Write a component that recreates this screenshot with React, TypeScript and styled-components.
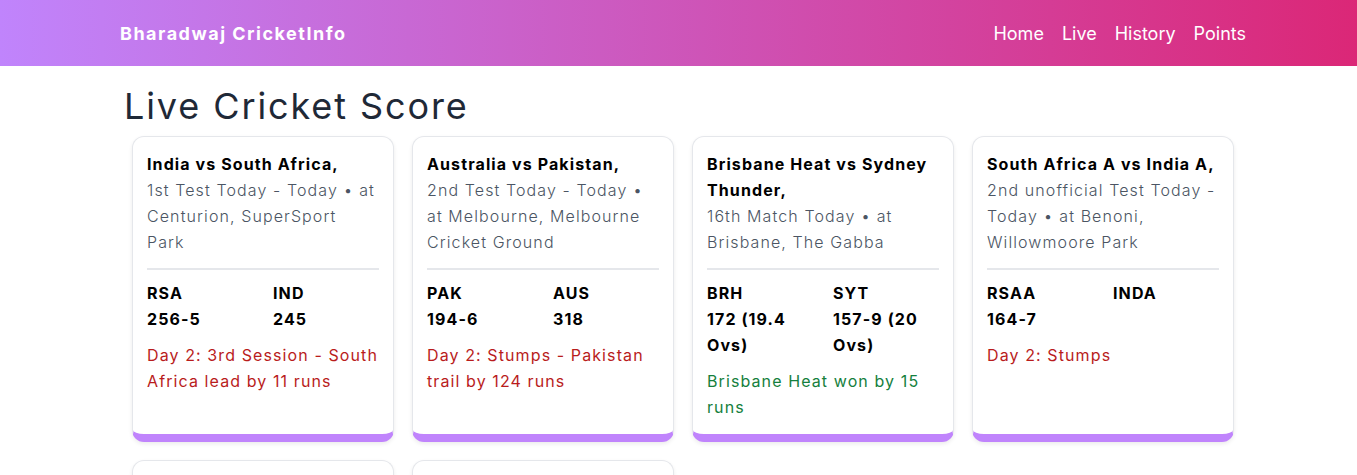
import styled, { createGlobalStyle } from 'styled-components'

const GlobalStyle = createGlobalStyle`
  * {
    box-sizing: border-box;
  }

  body {
    margin: 0;
    font-family: Inter, 'Noto Sans', sans-serif;
    background: #ffffff;
    color: #111827;
  }
`

interface Match {
  title: string
  info: string
  teams: { name: string; score: string }[]
  status: string
  result: 'live' | 'done'
}

const matches: Match[] = [
  {
    title: 'India vs South Africa,',
    info: '1st Test Today - Today • at Centurion, SuperSport Park',
    teams: [
      { name: 'RSA', score: '256-5' },
      { name: 'IND', score: '245' },
    ],
    status: 'Day 2: 3rd Session - South Africa lead by 11 runs',
    result: 'live',
  },
  {
    title: 'Australia vs Pakistan,',
    info: '2nd Test Today - Today • at Melbourne, Melbourne Cricket Ground',
    teams: [
      { name: 'PAK', score: '194-6' },
      { name: 'AUS', score: '318' },
    ],
    status: 'Day 2: Stumps - Pakistan trail by 124 runs',
    result: 'live',
  },
  {
    title: 'Brisbane Heat vs Sydney Thunder,',
    info: '16th Match Today • at Brisbane, The Gabba',
    teams: [
      { name: 'BRH', score: '172 (19.4 Ovs)' },
      { name: 'SYT', score: '157-9 (20 Ovs)' },
    ],
    status: 'Brisbane Heat won by 15 runs',
    result: 'done',
  },
  {
    title: 'South Africa A vs India A,',
    info: '2nd unofficial Test Today - Today • at Benoni, Willowmoore Park',
    teams: [
      { name: 'RSAA', score: '164-7' },
      { name: 'INDA', score: '' },
    ],
    status: 'Day 2: Stumps',
    result: 'live',
  },
  {
    title: 'New Zealand vs Bangladesh,',
    info: '3rd T20I Today • at Mount Maunganui, Bay Oval',
    teams: [
      { name: 'BAN', score: '110 (19.2 Ovs)' },
      { name: 'NZ', score: '95-5 (14.4 Ovs)' },
    ],
    status: 'No result',
    result: 'done',
  },
  {
    title: 'Melbourne Stars vs Perth Scorchers,',
    info: '17th Match Today • at Melbourne, MCG',
    teams: [
      { name: 'MLS', score: '' },
      { name: 'PRS', score: '' },
    ],
    status: 'Match yet to begin',
    result: 'live',
  },
]

const NavBar = styled.header`
  height: 66px;
  background: linear-gradient(90deg, #c084fc 0%, #db2777 100%);
  color: #ffffff;
`

const NavInner = styled.div`
  width: 1126px;
  height: 100%;
  margin-left: 120px;
  display: flex;
  align-items: center;
  justify-content: space-between;
`

const Brand = styled.span`
  font-size: 18px;
  font-weight: 700;
  letter-spacing: 1.5px;
`

const NavLinks = styled.nav`
  display: flex;
  gap: 18px;
`

const NavLink = styled.a`
  font-size: 18px;
  color: #ffffff;
  text-decoration: none;
`

const Main = styled.main`
  width: 1126px;
  margin-left: 120px;
`

const Title = styled.h1`
  margin: 18px 0 8px 4px;
  font-size: 36px;
  font-weight: 400;
  line-height: 44px;
  letter-spacing: 1.9px;
  color: #1f2937;
`

const Grid = styled.div`
  display: grid;
  grid-template-columns: repeat(4, 262px);
  gap: 18px;
  padding: 0 12px;
`

const Card = styled.article`
  display: flex;
  flex-direction: column;
  padding: 14px;
  background: #ffffff;
  border: 1px solid #e5e7eb;
  border-bottom: 8px solid #c084fc;
  border-radius: 12px;
  box-shadow: 0 2px 4px rgba(0, 0, 0, 0.08);
  font-size: 16px;
  line-height: 26px;
  letter-spacing: 1.1px;
`

const MatchTitle = styled.h2`
  margin: 0;
  font-size: 16px;
  font-weight: 700;
  line-height: 26px;
  color: #000000;
`

const Info = styled.p`
  margin: 0;
  font-weight: 300;
  color: #4b5563;
`

const Divider = styled.hr`
  margin: 13px 0 10px;
  border: none;
  border-top: 2px solid #e5e7eb;
`

const Teams = styled.div`
  display: grid;
  grid-template-columns: 126px 1fr;
`

const Team = styled.div`
  font-weight: 700;
  color: #000000;
  line-height: 26px;
  padding-right: 8px;
`

const Status = styled.p<{ $result: 'live' | 'done' }>`
  margin: 10px 0 0;
  font-weight: 400;
  color: ${(p) => (p.$result === 'done' ? '#15803d' : '#b91c1c')};
`

function MatchCard({ match }: { match: Match }) {
  return (
    <Card>
      <MatchTitle>{match.title}</MatchTitle>
      <Info>{match.info}</Info>
      <Divider />
      <Teams>
        {match.teams.map((t) => (
          <Team key={t.name}>
            <div>{t.name}</div>
            <div>{t.score}</div>
          </Team>
        ))}
      </Teams>
      <Status $result={match.result}>{match.status}</Status>
    </Card>
  )
}

export default function App() {
  return (
    <>
      <GlobalStyle />
      <NavBar>
        <NavInner>
          <Brand>Bharadwaj CricketInfo</Brand>
          <NavLinks>
            <NavLink href="#">Home</NavLink>
            <NavLink href="#">Live</NavLink>
            <NavLink href="#">History</NavLink>
            <NavLink href="#">Points</NavLink>
          </NavLinks>
        </NavInner>
      </NavBar>
      <Main>
        <Title>Live Cricket Score</Title>
        <Grid>
          {matches.map((m) => (
            <MatchCard key={m.title} match={m} />
          ))}
        </Grid>
      </Main>
    </>
  )
}
